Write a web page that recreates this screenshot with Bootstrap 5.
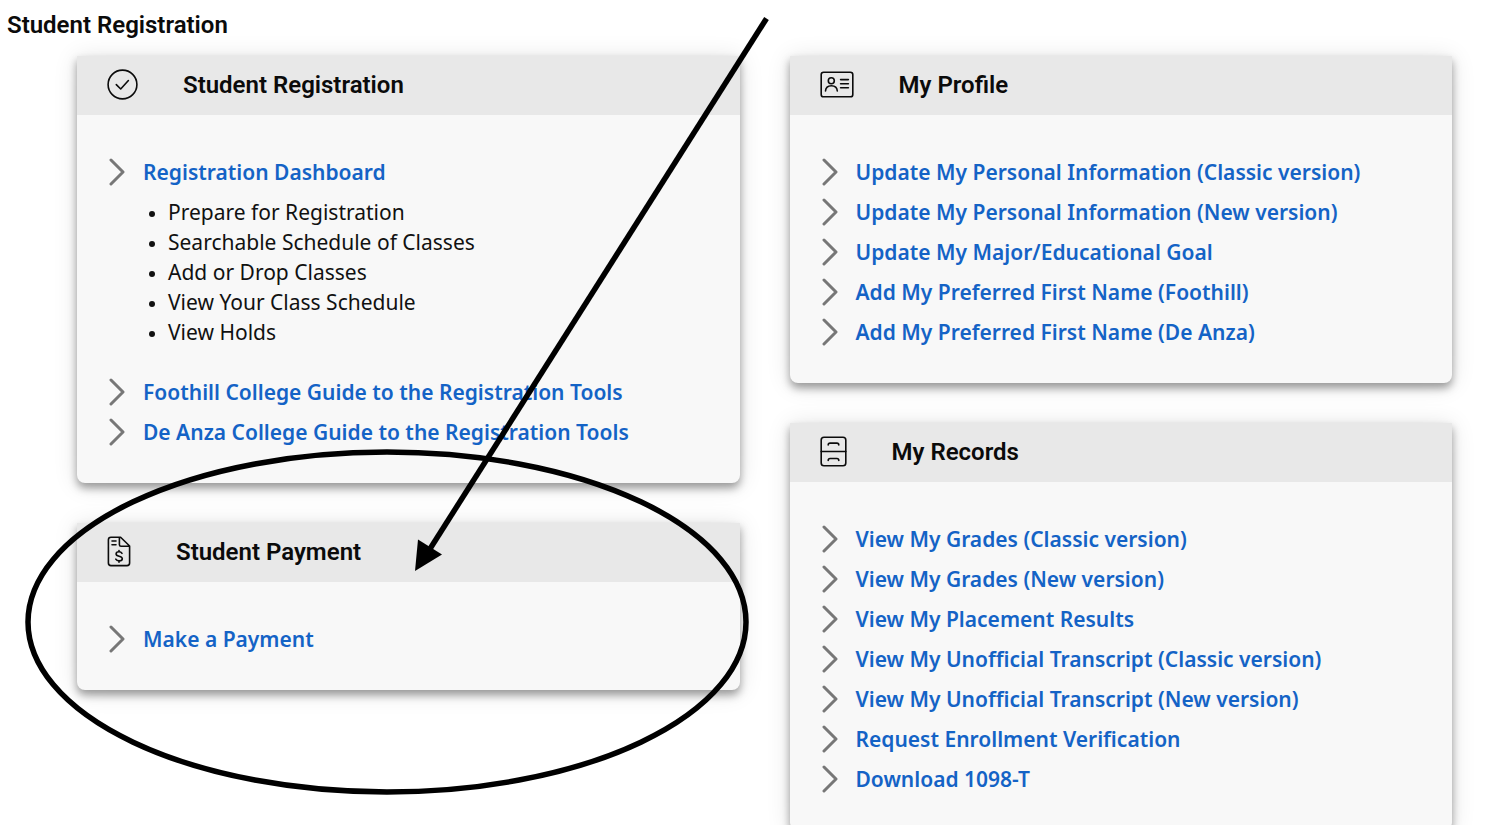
<!DOCTYPE html>
<html lang="en">
<head>
<meta charset="utf-8">
<meta name="viewport" content="width=device-width, initial-scale=1">
<title>Student Registration</title>
<link href="https://cdn.jsdelivr.net/npm/bootstrap@5.3.0/dist/css/bootstrap.min.css" rel="stylesheet">
<style>
  body { font-family: "Noto Sans", sans-serif; font-size: 21px; line-height: 30px; color: #111; background: #fff; }
  h1, h2 { font-family: Roboto, sans-serif; font-size: 24px; line-height: 30px; font-weight: 600; color: #0b0b0b; }
  .page { scrollbar-width: none; }
  .page-title { padding: 10px 7px 16px; }
  .board { padding: 0 45px 40px 77px; }
  .board .row { --bs-gutter-x: 50px; }
  .stack { gap: 40px; }
  .panel { border: 0; border-radius: 0 0 8px 8px; background: #f8f8f8; box-shadow: 0 5px 8px rgba(0,0,0,.36), 0 2px 24px rgba(0,0,0,.12); }
  .panel .card-header { height: 59px; padding: 0 30px 2px; gap: 45px; background: #e8e8e8; border: 0; border-radius: 0; }
  .panel .card-body { padding: 42px 32px 36px; }
  .links { gap: 10px; }
  .links a { color: #1463c6; font-weight: 600; text-decoration: none; }
  .links a:hover { text-decoration: underline; }
  .arrow-link { display: flex; align-items: center; gap: 18px; height: 30px; }
  .topics { padding-left: 59px; margin: 10px 0 30px; }
  .topics li::marker { font-size: 18px; }
  .chevron { flex: none; width: 16px; height: 28px; fill: none; stroke: #777; stroke-width: 3; stroke-linecap: round; stroke-linejoin: round; }
  .line-icon { flex: none; fill: none; stroke: #0b0b0b; stroke-width: 1.6; stroke-linecap: round; stroke-linejoin: round; }
  .annotation { top: 0; left: 0; pointer-events: none; z-index: 5; }
</style>
</head>
<body>
<svg class="d-none" aria-hidden="true"><symbol id="chevron" viewBox="0 0 16 28"><path d="M2 2 14 14 2 26"/></symbol></svg>
<main class="page position-relative vh-100 overflow-auto">
  <h1 class="page-title m-0">Student Registration</h1>
  <div class="board">
    <div class="row">
      <div class="col-6 d-flex flex-column stack">
        <section class="card panel">
          <div class="card-header d-flex align-items-center">
            <svg class="line-icon" width="31" height="31" viewBox="0 0 31 31" aria-hidden="true"><circle cx="15.5" cy="15.5" r="14.4"/><path d="m9.3 15.6 4.4 4.4 7.7-8.5"/></svg>
            <h2 class="m-0">Student Registration</h2>
          </div>
          <div class="card-body">
            <ul class="list-unstyled links m-0">
              <li class="arrow-link"><svg class="chevron" aria-hidden="true"><use href="#chevron"/></svg><a href="#">Registration Dashboard</a></li>
            </ul>
            <ul class="topics">
              <li>Prepare for Registration</li>
              <li>Searchable Schedule of Classes</li>
              <li>Add or Drop Classes</li>
              <li>View Your Class Schedule</li>
              <li>View Holds</li>
            </ul>
            <ul class="list-unstyled d-flex flex-column links m-0">
              <li class="arrow-link"><svg class="chevron" aria-hidden="true"><use href="#chevron"/></svg><a href="#">Foothill College Guide to the Registration Tools</a></li>
              <li class="arrow-link"><svg class="chevron" aria-hidden="true"><use href="#chevron"/></svg><a href="#">De Anza College Guide to the Registration Tools</a></li>
            </ul>
          </div>
        </section>
        <section class="card panel">
          <div class="card-header d-flex align-items-center">
            <svg class="line-icon" width="24" height="31" viewBox="0 0 24 31" aria-hidden="true"><path d="M4 1.2h9.600L22.600 10v17a2.600 2.600 0 0 1-2.600 2.600H4A2.600 2.600 0 0 1 1.400 27V3.800A2.600 2.600 0 0 1 4 1.200ZM12.400 1.500v7.200a1.600 1.600 0 0 0 1.600 1.600h8.300M5 5h4M5 8.800h4"/><path d="M15 17.300c-.6-1-1.600-1.500-3-1.500-1.700 0-2.900.8-2.900 2.100 0 1.500 1.300 1.900 3 2.300 1.800.4 3.200.9 3.200 2.500 0 1.400-1.300 2.200-3.200 2.200-1.500 0-2.700-.6-3.300-1.700M12 14.500v1.300M12 24.900v1.400"/></svg>
            <h2 class="m-0">Student Payment</h2>
          </div>
          <div class="card-body">
            <ul class="list-unstyled links m-0">
              <li class="arrow-link"><svg class="chevron" aria-hidden="true"><use href="#chevron"/></svg><a href="#">Make a Payment</a></li>
            </ul>
          </div>
        </section>
      </div>
      <div class="col-6 d-flex flex-column stack">
        <section class="card panel">
          <div class="card-header d-flex align-items-center">
            <svg class="line-icon" width="34" height="27" viewBox="0 0 34 27" aria-hidden="true"><rect x="1.200" y="1.200" width="31.600" height="24.600" rx="2.400"/><circle cx="11.300" cy="9.800" r="3"/><path d="M5.500 20c.2-3.600 2.500-5.300 5.900-5.300s5.700 1.700 5.900 5.300M20.600 8.600h7.800M20.600 12.700h7.800M20.600 16.800h7.800"/></svg>
            <h2 class="m-0">My Profile</h2>
          </div>
          <div class="card-body">
            <ul class="list-unstyled d-flex flex-column links m-0">
              <li class="arrow-link"><svg class="chevron" aria-hidden="true"><use href="#chevron"/></svg><a href="#">Update My Personal Information (Classic version)</a></li>
              <li class="arrow-link"><svg class="chevron" aria-hidden="true"><use href="#chevron"/></svg><a href="#">Update My Personal Information (New version)</a></li>
              <li class="arrow-link"><svg class="chevron" aria-hidden="true"><use href="#chevron"/></svg><a href="#">Update My Major/Educational Goal</a></li>
              <li class="arrow-link"><svg class="chevron" aria-hidden="true"><use href="#chevron"/></svg><a href="#">Add My Preferred First Name (Foothill)</a></li>
              <li class="arrow-link"><svg class="chevron" aria-hidden="true"><use href="#chevron"/></svg><a href="#">Add My Preferred First Name (De Anza)</a></li>
            </ul>
          </div>
        </section>
        <section class="card panel">
          <div class="card-header d-flex align-items-center">
            <svg class="line-icon" width="27" height="31" viewBox="0 0 27 31" aria-hidden="true"><rect x="1.200" y="1.200" width="24.600" height="28.600" rx="2.800"/><path d="M1.200 15.500h24.600M8.200 9c0-1.300.6-1.900 1.900-1.900h6.800c1.300 0 1.900.6 1.900 1.900M8.200 24.400c0-1.300.6-1.900 1.900-1.900h6.800c1.300 0 1.900.6 1.900 1.900"/></svg>
            <h2 class="m-0">My Records</h2>
          </div>
          <div class="card-body">
            <ul class="list-unstyled d-flex flex-column links m-0">
              <li class="arrow-link"><svg class="chevron" aria-hidden="true"><use href="#chevron"/></svg><a href="#">View My Grades (Classic version)</a></li>
              <li class="arrow-link"><svg class="chevron" aria-hidden="true"><use href="#chevron"/></svg><a href="#">View My Grades (New version)</a></li>
              <li class="arrow-link"><svg class="chevron" aria-hidden="true"><use href="#chevron"/></svg><a href="#">View My Placement Results</a></li>
              <li class="arrow-link"><svg class="chevron" aria-hidden="true"><use href="#chevron"/></svg><a href="#">View My Unofficial Transcript (Classic version)</a></li>
              <li class="arrow-link"><svg class="chevron" aria-hidden="true"><use href="#chevron"/></svg><a href="#">View My Unofficial Transcript (New version)</a></li>
              <li class="arrow-link"><svg class="chevron" aria-hidden="true"><use href="#chevron"/></svg><a href="#">Request Enrollment Verification</a></li>
              <li class="arrow-link"><svg class="chevron" aria-hidden="true"><use href="#chevron"/></svg><a href="#">Download 1098-T</a></li>
            </ul>
          </div>
        </section>
      </div>
    </div>
  </div>
  <!-- Callout: circle round the payment card and an arrow to it -->
  <svg class="annotation position-absolute" width="780" height="810" viewBox="0 0 780 810" aria-hidden="true">
    <ellipse cx="387" cy="622" rx="359" ry="170" fill="none" stroke="#000" stroke-width="5.500"/>
    <path d="M766.500 18.500 428 552" stroke="#000" stroke-width="5.500"/>
    <path d="M415 571 418 539.500 442 554.500Z"/>
  </svg>
</main>
<script src="https://cdn.jsdelivr.net/npm/bootstrap@5.3.0/dist/js/bootstrap.bundle.min.js"></script>
</body>
</html>
